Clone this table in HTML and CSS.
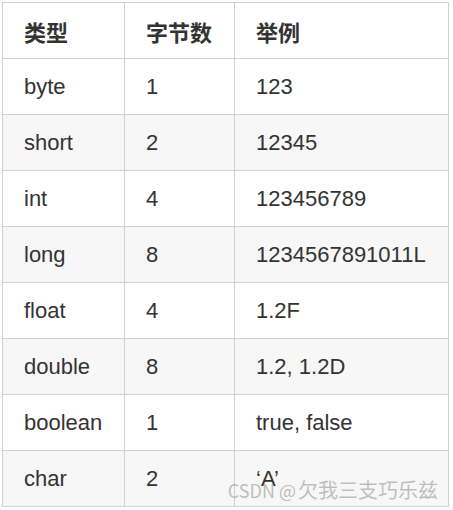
FILE: index.html
```html
<!DOCTYPE html>
<html lang="zh">
<head>
<meta charset="utf-8">
<link rel="stylesheet" href="styles.css">
</head>
<body>
<div class="wrap">
<table class="data">
  <colgroup>
    <col class="c1"><col class="c2"><col class="c3">
  </colgroup>
  <thead>
    <tr><th>类型</th><th>字节数</th><th>举例</th></tr>
  </thead>
  <tbody>
    <tr><td>byte</td><td>1</td><td>123</td></tr>
    <tr><td>short</td><td>2</td><td>12345</td></tr>
    <tr><td>int</td><td>4</td><td>123456789</td></tr>
    <tr><td>long</td><td>8</td><td>1234567891011L</td></tr>
    <tr><td>float</td><td>4</td><td>1.2F</td></tr>
    <tr><td>double</td><td>8</td><td>1.2, 1.2D</td></tr>
    <tr><td>boolean</td><td>1</td><td>true, false</td></tr>
    <tr><td>char</td><td>2</td><td>‘A’</td></tr>
  </tbody>
</table>
<div class="watermark">CSDN @<span class="wm-name">欠我三支巧乐兹</span></div>
</div>
</body>
</html>
```
FILE: styles.css
```css
html, body {
  margin: 0;
  padding: 0;
  background: #fff;
}
.wrap {
  position: relative;
  width: 453px;
  height: 510px;
  padding: 2px;
  box-sizing: border-box;
}
.data {
  border-collapse: collapse;
  table-layout: fixed;
  width: 447px;
  font-family: "Liberation Sans", Arial, "Noto Sans CJK SC", sans-serif;
  font-size: 22px;
  color: #333;
}
.c1 { width: 122px; }
.c2 { width: 110px; }
.c3 { width: 214px; }
.data th, .data td {
  border: 1px solid #d0d0d0;
  height: 55px;
  padding: 0 0 0 21px;
  text-align: left;
  vertical-align: middle;
  white-space: nowrap;
}
.data th {
  font-family: "Noto Sans CJK SC", sans-serif;
  font-weight: 700;
  font-size: 22px;
  color: #333;
}
.data tbody tr:nth-child(even) td {
  background: #f7f7f7;
}
.watermark {
  position: absolute;
  right: 15px;
  bottom: 6px;
  font-family: "Noto Sans CJK SC", sans-serif;
  font-size: 18px;
  color: rgba(150, 150, 150, 0.6);
  white-space: nowrap;
}
.wm-name {
  font-size: 20px;
  letter-spacing: 0;
  margin-left: 2px;
}
```
